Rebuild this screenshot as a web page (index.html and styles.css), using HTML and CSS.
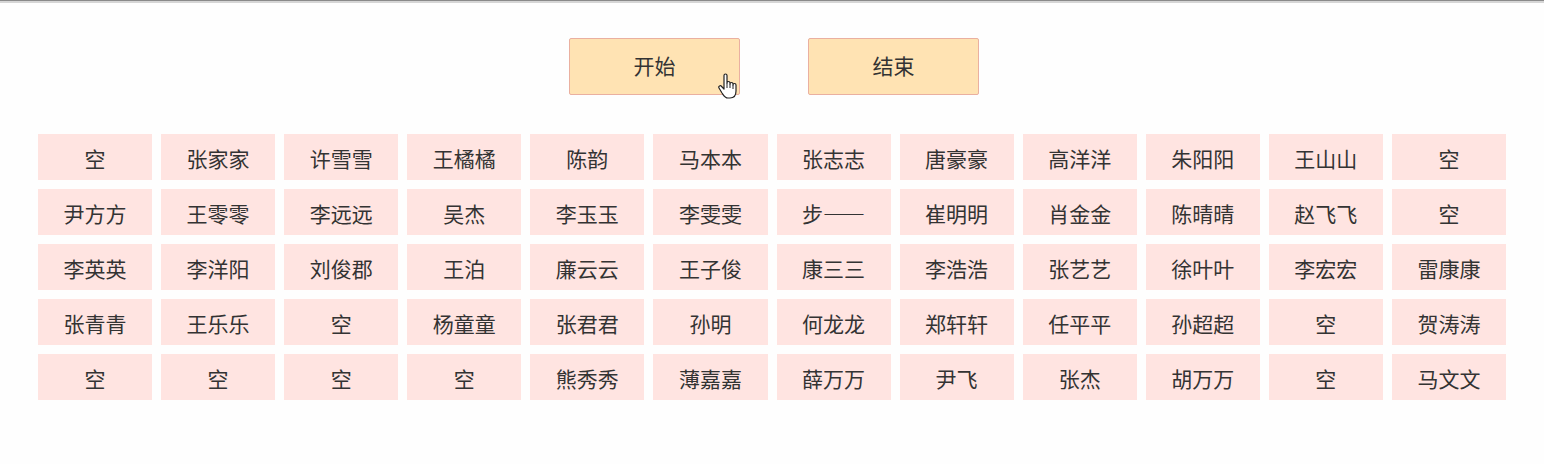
FILE: index.html
```html
<!DOCTYPE html>
<html lang="zh-CN">
<head>
    <meta charset="UTF-8">
    <meta name="viewport" content="width=device-width, initial-scale=1.0">
    <title>随机点名</title>
    <link rel="stylesheet" href="styles.css">
</head>
<body>
    <div class="topline"></div>
    <div class="controls">
        <button class="btn" id="startBtn">开始
            <svg class="cursor" width="20" height="26" viewBox="0 0 20 26">
                <path d="M6 2.5a1.5 1.5 0 0 1 3 0V10a1.5 1.5 0 0 1 3 0v1a1.5 1.5 0 0 1 3 0v1a1.5 1.5 0 0 1 3 0v6c0 4-2 7-6 7h-2c-3 0-4-2-6-5l-3-5a1.5 1.5 0 0 1 2.6-1.5L6 16Z" fill="#fff" stroke="#222" stroke-width="1.2" stroke-linejoin="round"/>
                <path d="M9 10v5M12 11v4M15 12v4" stroke="#222" stroke-width="1"/>
            </svg>
        </button>
        <button class="btn" id="stopBtn">结束</button>
    </div>
    <div class="seats" id="seats">
        <!-- 座位由脚本生成 -->
    </div>
    <script>
        const names = [
            "空", "张家家", "许雪雪", "王橘橘", "陈韵", "马本本", "张志志", "唐豪豪", "高洋洋", "朱阳阳", "王山山", "空",
            "尹方方", "王零零", "李远远", "吴杰", "李玉玉", "李雯雯", "步——", "崔明明", "肖金金", "陈晴晴", "赵飞飞", "空",
            "李英英", "李洋阳", "刘俊郡", "王泊", "廉云云", "王子俊", "康三三", "李浩浩", "张艺艺", "徐叶叶", "李宏宏", "雷康康",
            "张青青", "王乐乐", "空", "杨童童", "张君君", "孙明", "何龙龙", "郑轩轩", "任平平", "孙超超", "空", "贺涛涛",
            "空", "空", "空", "空", "熊秀秀", "薄嘉嘉", "薛万万", "尹飞", "张杰", "胡万万", "空", "马文文"
        ];
        const box = document.getElementById('seats');
        names.forEach(n => {
            const cell = document.createElement('div');
            cell.className = 'seat';
            cell.textContent = n;
            box.appendChild(cell);
        });
    </script>
</body>
</html>
```
FILE: styles.css
```css
body {
    margin: 0;
    background-color: #fefefe;
    font-family: "Noto Sans CJK SC", "Liberation Sans", sans-serif;
    color: #333;
}

.topline {
    height: 2px;
    border-top: 1px solid #8a8a8a;
    background-color: #d6d6d6;
}

.controls {
    display: flex;
    justify-content: center;
    gap: 68px;
    padding-top: 35px;
    padding-left: 4px;
}

.btn {
    position: relative;
    width: 171px;
    height: 57px;
    background-color: #ffe3b3;
    border: 1px solid #eab0a0;
    border-radius: 2px;
    font-family: inherit;
    font-size: 21px;
    color: #333;
    padding: 0 0 4px;
}

.cursor {
    position: absolute;
    left: 148px;
    top: 34px;
}

.seats {
    width: 1468px;
    margin: 39px auto 0;
    display: grid;
    grid-template-columns: repeat(12, 1fr);
    grid-auto-rows: 46px;
    gap: 9px;
}

.seat {
    background-color: #ffe4e1;
    text-align: center;
    line-height: 48px;
    font-size: 21px;
}
```
